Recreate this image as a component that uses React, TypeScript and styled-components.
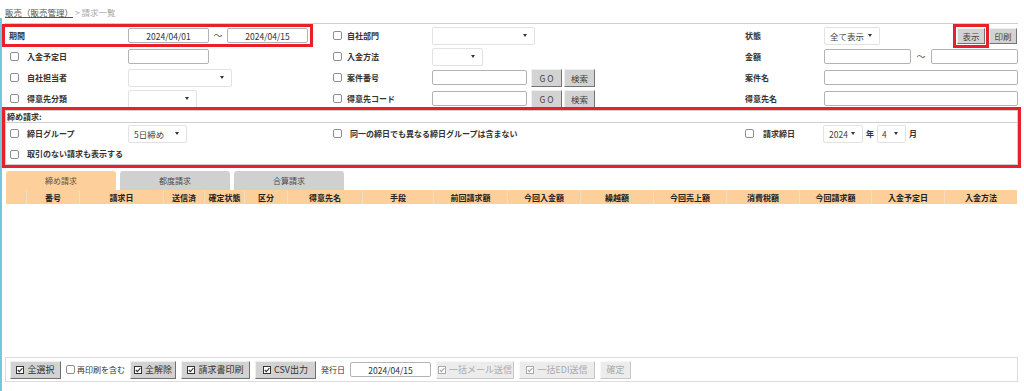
import React from "react"
import styled, { createGlobalStyle } from "styled-components"

const GlobalStyle = createGlobalStyle`
  html, body {
    margin: 0;
    padding: 0;
    background: #fff;
  }
  body {
    font-family: "Noto Sans CJK JP", "Noto Sans", sans-serif;
    font-size: 8px;
    color: #333;
  }
  * {
    box-sizing: border-box;
  }
`

const Page = styled.div`
  width: 1024px;
  height: 391px;
  display: flex;
  flex-direction: column;
  overflow: hidden;
`

const Breadcrumb = styled.div`
  height: 18px;
  padding: 6px 0 0 5px;
  font-size: 8.5px;
  line-height: 12px;
  color: #a8a8a8;
  white-space: nowrap;
`

const Crumb = styled.a`
  color: #55554a;
  text-decoration: underline;
`

const Main = styled.div`
  flex: 1;
  display: flex;
  flex-direction: column;
  border-left: 2px solid #74c7dc;
  padding: 5px 6px 9px 3px;
  min-height: 0;
`

const Filter = styled.div`
  border-top: 1px solid #cfcfcf;
  padding-top: 1px;
`

const Row = styled.div<{ $cols: string; $h?: number }>`
  display: grid;
  grid-template-columns: ${p => p.$cols};
  height: ${p => p.$h ?? 21}px;
`

const Group = styled.div<{ $pad?: number }>`
  display: flex;
  align-items: center;
  padding-left: ${p => p.$pad ?? 0}px;
  min-width: 0;
`

const MarkedField = styled.div`
  display: flex;
  align-items: center;
  width: 305px;
  height: 17px;
  padding-left: 4px;
  outline: 3px solid #e8202a;
`

const CheckSlot = styled.div<{ $w: number }>`
  width: ${p => p.$w}px;
  flex-shrink: 0;
  display: flex;
  align-items: center;
`

const Check = styled.span`
  display: block;
  width: 9px;
  height: 9px;
  border: 1px solid #8f8f8f;
  border-radius: 2px;
  background: #fff;
`

const Label = styled.span<{ $w?: number }>`
  ${p => (p.$w ? `width: ${p.$w}px;` : "")}
  flex-shrink: 0;
  font-weight: 700;
  font-size: 8px;
  line-height: 12px;
  color: #333;
  white-space: nowrap;
`

const TextInput = styled.input<{ $w?: number }>`
  ${p => (p.$w ? `width: ${p.$w}px;` : "flex: 1; min-width: 0;")}
  height: 15px;
  border: 1px solid #b3b3b3;
  border-radius: 2px;
  padding: 0 4px;
  font-family: inherit;
  font-size: 8.5px;
  color: #333;
  text-align: center;
  background: #fff;
  outline: none;
`

const Select = styled.div<{ $w: number; $pl?: number }>`
  width: ${p => p.$w}px;
  height: 18px;
  flex-shrink: 0;
  display: flex;
  align-items: center;
  padding: 0 7px 0 ${p => p.$pl ?? 5}px;
  border: 1px solid #e2e2e2;
  border-radius: 2px;
  background: #fff;
  font-size: 8.5px;
  color: #444;
  white-space: nowrap;
`

const Arrow = styled.span`
  margin-left: auto;
  width: 0;
  height: 0;
  border-left: 2.5px solid transparent;
  border-right: 2.5px solid transparent;
  border-top: 3px solid #333;
`

const Tilde = styled.span<{ $w: number }>`
  width: ${p => p.$w}px;
  text-align: center;
  font-size: 9px;
  color: #555;
`

const Unit = styled.span`
  margin: 0 3px;
  font-weight: 700;
  font-size: 8px;
  color: #333;
`

const FormButton = styled.button<{ $w: number; $h?: number; $spaced?: boolean; $marked?: boolean; $ml?: number }>`
  width: ${p => p.$w}px;
  height: ${p => p.$h ?? 18}px;
  flex-shrink: 0;
  margin-left: ${p => p.$ml ?? 0}px;
  padding: 0;
  background: #d3d3d3;
  border: 1px solid;
  border-color: #efefef #747474 #747474 #efefef;
  font-family: inherit;
  font-size: 8.5px;
  color: #444;
  letter-spacing: ${p => (p.$spaced ? "2px" : "0")};
  text-indent: ${p => (p.$spaced ? "2px" : "0")};
  ${p => (p.$marked ? "outline: 3px solid #e8202a; outline-offset: 1px;" : "")}
`

const Actions = styled.div`
  margin-left: auto;
  margin-right: 1px;
  display: flex;
  gap: 4px;
`

const Closing = styled.section`
  margin-top: 1px;
  border: 1px solid #cfcfcf;
  outline: 3px solid #e8202a;
`

const ClosingTitle = styled.div`
  height: 12px;
  padding-left: 1px;
  border-bottom: 1px solid #cfcfcf;
  font-weight: 700;
  font-size: 8px;
  line-height: 11px;
  color: #333;
`

const Tabs = styled.div`
  display: flex;
  gap: 4px;
  margin-top: 6px;
  padding-left: 1px;
`

const Tab = styled.div<{ $active?: boolean }>`
  width: 110px;
  height: 19px;
  display: flex;
  align-items: center;
  justify-content: center;
  border-radius: 3px 3px 0 0;
  background: ${p => (p.$active ? "#fdcf9b" : "#d0d0d0")};
  font-size: 8px;
  color: ${p => (p.$active ? "#5e5044" : "#4a4a4a")};
`

const columns: [string, number][] = [
  ["", 20],
  ["番号", 53],
  ["請求日", 84],
  ["送信済", 41],
  ["確定状態", 40],
  ["区分", 43],
  ["得意先名", 75],
  ["手段", 71],
  ["前回請求額", 74],
  ["今回入金額", 73],
  ["繰越額", 73],
  ["今回売上額", 73],
  ["消費税額", 73],
  ["今回請求額", 72],
  ["入金予定日", 73],
  ["入金方法", 73],
]

const TableHead = styled.div`
  display: grid;
  grid-template-columns: ${columns.map(c => `${c[1]}px`).join(" ")};
  width: 1011px;
  height: 14px;
  margin-left: 1px;
  background: #fdcf9b;
`

const HeadCell = styled.div<{ $first?: boolean }>`
  display: flex;
  align-items: center;
  justify-content: center;
  border-left: ${p => (p.$first ? "none" : "1px solid #f3dcc2")};
  font-weight: 700;
  font-size: 8px;
  color: #222;
  white-space: nowrap;
`

const TableBody = styled.div`
  flex: 1;
`

const Toolbar = styled.div`
  height: 25px;
  display: flex;
  align-items: center;
  gap: 5px;
  padding-left: 4px;
  border: 1px solid #dcdcdc;
`

const ToolButton = styled.button<{ $w: number; $off?: boolean }>`
  width: ${p => p.$w}px;
  height: 18px;
  flex-shrink: 0;
  display: inline-flex;
  align-items: center;
  justify-content: center;
  gap: 3px;
  padding: 0;
  background: ${p => (p.$off ? "#ececec" : "#d2d2d2")};
  border: 1px solid;
  border-color: ${p => (p.$off ? "#f8f8f8 #c6c6c6 #c6c6c6 #f8f8f8" : "#f0f0f0 #6f6f6f #6f6f6f #f0f0f0")};
  font-family: inherit;
  font-size: 9px;
  color: ${p => (p.$off ? "#aaa" : "#333")};
  white-space: nowrap;
`

const CheckLabel = styled.label`
  display: flex;
  align-items: center;
  gap: 2px;
  font-size: 8px;
  color: #333;
  white-space: nowrap;
`

const PlainText = styled.span`
  font-size: 8px;
  color: #333;
  white-space: nowrap;
`

const CheckIcon = () => (
  <svg width="8" height="8" viewBox="0 0 8 8">
    <rect x="0.5" y="0.5" width="7" height="7" fill="#fff" stroke="currentColor" />
    <path d="M1.8 4 L3.4 5.6 L6.4 2.2" fill="none" stroke="currentColor" strokeWidth="1.1" />
  </svg>
)

const topCols = "324px 411px 1fr"
const closeCols = "323px 411px 1fr"

const App = () => {
  return (
    <>
      <GlobalStyle />
      <Page>
        <Breadcrumb>
          <Crumb>販売（販売管理）</Crumb> &gt; 請求一覧
        </Breadcrumb>
        <Main>
          <Filter>
            <Row $cols={topCols}>
              <Group>
                <MarkedField>
                  <Label $w={119}>期間</Label>
                  <TextInput $w={81} readOnly value="2024/04/01" />
                  <Tilde $w={18}>～</Tilde>
                  <TextInput $w={81} readOnly value="2024/04/15" />
                </MarkedField>
              </Group>
              <Group $pad={4}>
                <CheckSlot $w={14}><Check /></CheckSlot>
                <Label $w={85}>自社部門</Label>
                <Select $w={103}><Arrow /></Select>
              </Group>
              <Group $pad={5}>
                <Label $w={79}>状態</Label>
                <Select $w={56}>全て表示<Arrow /></Select>
                <Actions>
                  <FormButton $w={28} $h={16} $marked>表示</FormButton>
                  <FormButton $w={28} $h={16}>印刷</FormButton>
                </Actions>
              </Group>
            </Row>
            <Row $cols={topCols}>
              <Group $pad={5}>
                <CheckSlot $w={17}><Check /></CheckSlot>
                <Label $w={101}>入金予定日</Label>
                <TextInput $w={81} readOnly value="" />
              </Group>
              <Group $pad={4}>
                <CheckSlot $w={14}><Check /></CheckSlot>
                <Label $w={85}>入金方法</Label>
                <Select $w={51}><Arrow /></Select>
              </Group>
              <Group $pad={5}>
                <Label $w={79}>金額</Label>
                <TextInput $w={87} readOnly value="" />
                <Tilde $w={20}>～</Tilde>
                <TextInput readOnly value="" />
              </Group>
            </Row>
            <Row $cols={topCols}>
              <Group $pad={5}>
                <CheckSlot $w={17}><Check /></CheckSlot>
                <Label $w={101}>自社担当者</Label>
                <Select $w={104}><Arrow /></Select>
              </Group>
              <Group $pad={4}>
                <CheckSlot $w={14}><Check /></CheckSlot>
                <Label $w={85}>案件番号</Label>
                <TextInput $w={95} readOnly value="" />
                <FormButton $w={31} $ml={4} $spaced>GO</FormButton>
                <FormButton $w={31} $ml={2}>検索</FormButton>
              </Group>
              <Group $pad={5}>
                <Label $w={79}>案件名</Label>
                <TextInput readOnly value="" />
              </Group>
            </Row>
            <Row $cols={topCols}>
              <Group $pad={5}>
                <CheckSlot $w={17}><Check /></CheckSlot>
                <Label $w={101}>得意先分類</Label>
                <Select $w={69}><Arrow /></Select>
              </Group>
              <Group $pad={4}>
                <CheckSlot $w={14}><Check /></CheckSlot>
                <Label $w={85}>得意先コード</Label>
                <TextInput $w={95} readOnly value="" />
                <FormButton $w={31} $ml={4} $spaced>GO</FormButton>
                <FormButton $w={31} $ml={2}>検索</FormButton>
              </Group>
              <Group $pad={5}>
                <Label $w={79}>得意先名</Label>
                <TextInput readOnly value="" />
              </Group>
            </Row>
          </Filter>

          <Closing>
            <ClosingTitle>締め請求:</ClosingTitle>
            <Row $cols={closeCols}>
              <Group $pad={4}>
                <CheckSlot $w={17}><Check /></CheckSlot>
                <Label $w={101}>締日グループ</Label>
                <Select $w={59}>5日締め<Arrow /></Select>
              </Group>
              <Group $pad={4}>
                <CheckSlot $w={17}><Check /></CheckSlot>
                <Label>同一の締日でも異なる締日グループは含まない</Label>
              </Group>
              <Group $pad={5}>
                <CheckSlot $w={18}><Check /></CheckSlot>
                <Label $w={60}>請求締日</Label>
                <Select $w={40}>2024<Arrow /></Select>
                <Unit>年</Unit>
                <Select $w={29} $pl={4}>4<Arrow /></Select>
                <Unit>月</Unit>
              </Group>
            </Row>
            <Row $cols={closeCols} $h={20}>
              <Group $pad={4}>
                <CheckSlot $w={17}><Check /></CheckSlot>
                <Label>取引のない請求も表示する</Label>
              </Group>
            </Row>
          </Closing>

          <Tabs>
            <Tab $active>締め請求</Tab>
            <Tab>都度請求</Tab>
            <Tab>合算請求</Tab>
          </Tabs>
          <TableHead>
            {columns.map(([name], i) => (
              <HeadCell key={i} $first={i === 0}>{name}</HeadCell>
            ))}
          </TableHead>
          <TableBody />

          <Toolbar>
            <ToolButton $w={51}><CheckIcon />全選択</ToolButton>
            <CheckLabel><Check />再印刷を含む</CheckLabel>
            <ToolButton $w={46}><CheckIcon />全解除</ToolButton>
            <ToolButton $w={69}><CheckIcon />請求書印刷</ToolButton>
            <ToolButton $w={61}><CheckIcon />CSV出力</ToolButton>
            <PlainText>発行日</PlainText>
            <TextInput $w={81} readOnly value="2024/04/15" />
            <ToolButton $w={78} $off><CheckIcon />一括メール送信</ToolButton>
            <ToolButton $w={76} $off><CheckIcon />一括EDI送信</ToolButton>
            <ToolButton $w={31} $off>確定</ToolButton>
          </Toolbar>
        </Main>
      </Page>
    </>
  )
}

export default App
